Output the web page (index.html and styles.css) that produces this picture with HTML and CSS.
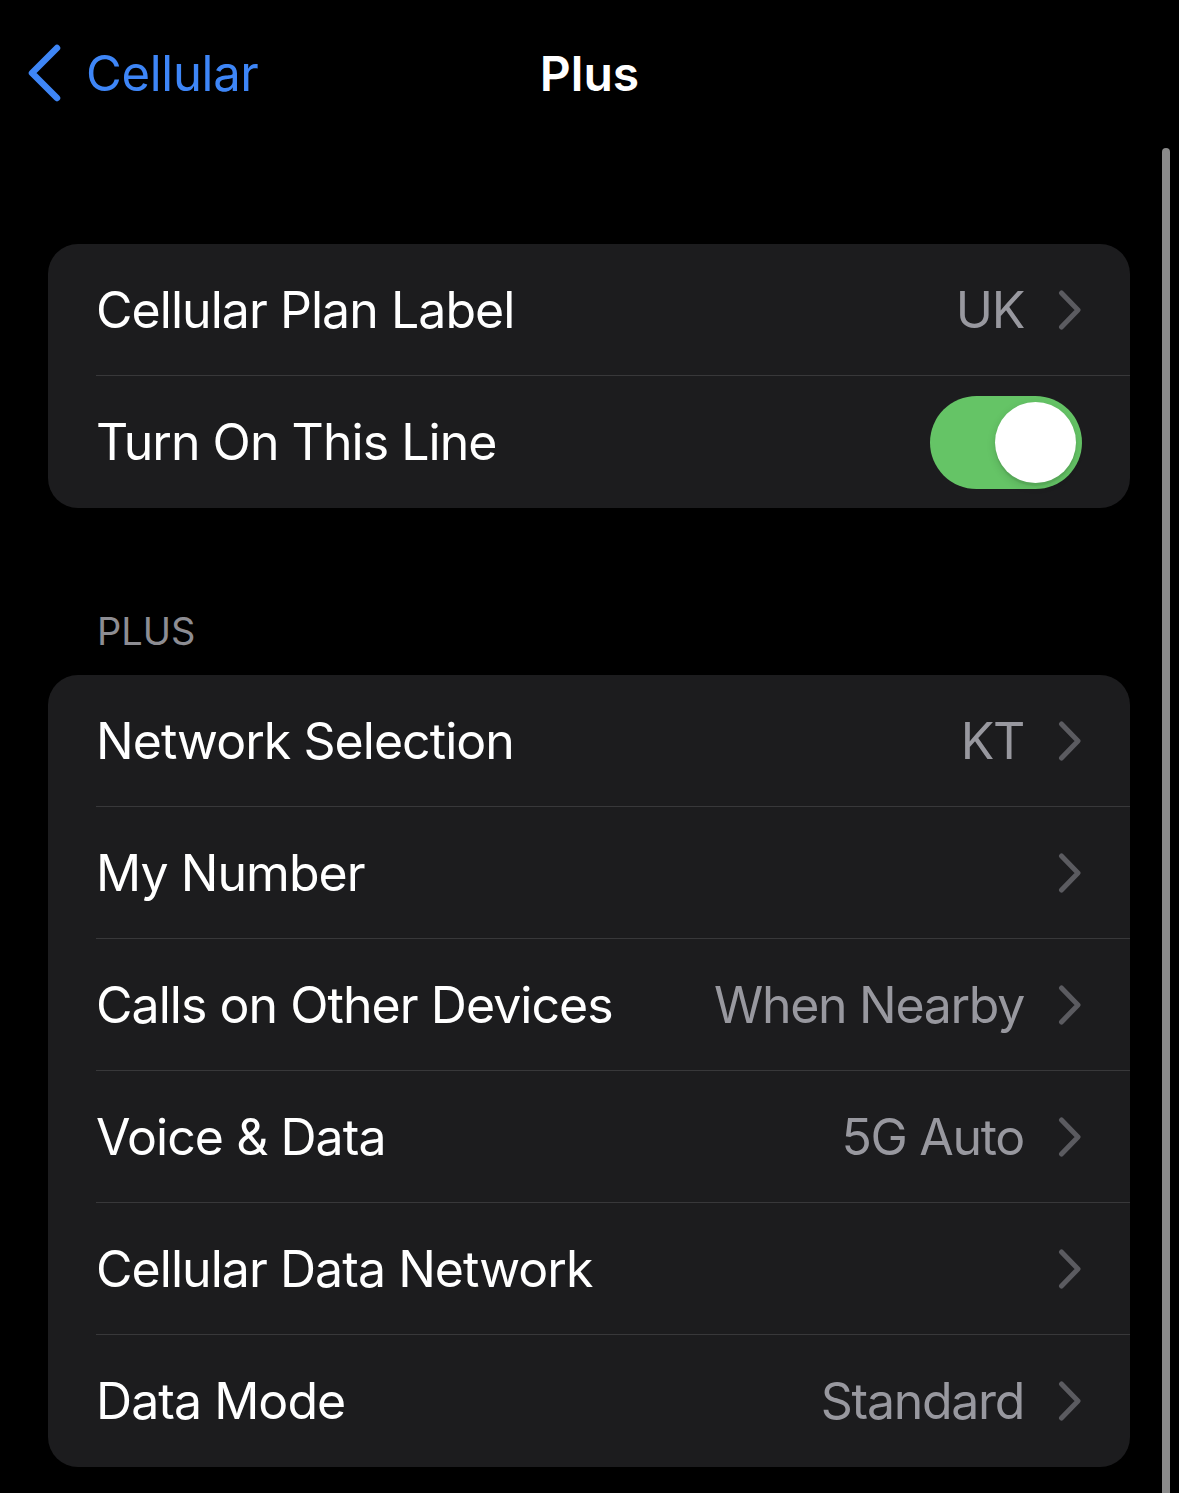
FILE: index.html
```html
<!DOCTYPE html>
<html lang="en">
  <head>
    <meta charset="UTF-8" />
    <meta name="viewport" content="width=device-width, initial-scale=1.0" />
    <title>Plus</title>
    <link rel="stylesheet" href="styles.css">
  </head>
  <body>
    <div class="nav">
      <a class="back" href="#">
        <svg class="back-icon" width="36" height="58" viewBox="0 0 36 58">
          <path d="M31 4 L6 29 L31 54" fill="none" stroke="#3e86f7" stroke-width="6.5" stroke-linecap="round" stroke-linejoin="round" />
        </svg>
        <span>Cellular</span>
      </a>
      <h1 class="title">Plus</h1>
      <div></div>
    </div>

    <div class="group first">
      <div class="row">
        <div class="row-inner">
          <span class="label">Cellular Plan Label</span>
          <span class="value">UK</span>
          <svg class="chevron" width="24" height="40" viewBox="0 0 24 40">
            <path d="M3.5 3 L20 20 L3.5 37" fill="none" stroke="#5b5b60" stroke-width="5" stroke-linecap="round" stroke-linejoin="round" />
          </svg>
        </div>
      </div>
      <div class="row">
        <div class="row-inner">
          <span class="label">Turn On This Line</span>
          <div class="switch on"><div class="knob"></div></div>
        </div>
      </div>
    </div>

    <div class="section-header">PLUS</div>

    <div class="group">
      <div class="row">
        <div class="row-inner">
          <span class="label">Network Selection</span>
          <span class="value">KT</span>
          <svg class="chevron" width="24" height="40" viewBox="0 0 24 40">
            <path d="M3.5 3 L20 20 L3.5 37" fill="none" stroke="#5b5b60" stroke-width="5" stroke-linecap="round" stroke-linejoin="round" />
          </svg>
        </div>
      </div>
      <div class="row">
        <div class="row-inner">
          <span class="label">My Number</span>
          <span class="value"></span>
          <svg class="chevron" width="24" height="40" viewBox="0 0 24 40">
            <path d="M3.5 3 L20 20 L3.5 37" fill="none" stroke="#5b5b60" stroke-width="5" stroke-linecap="round" stroke-linejoin="round" />
          </svg>
        </div>
      </div>
      <div class="row">
        <div class="row-inner">
          <span class="label">Calls on Other Devices</span>
          <span class="value">When Nearby</span>
          <svg class="chevron" width="24" height="40" viewBox="0 0 24 40">
            <path d="M3.5 3 L20 20 L3.5 37" fill="none" stroke="#5b5b60" stroke-width="5" stroke-linecap="round" stroke-linejoin="round" />
          </svg>
        </div>
      </div>
      <div class="row">
        <div class="row-inner">
          <span class="label">Voice &amp; Data</span>
          <span class="value">5G Auto</span>
          <svg class="chevron" width="24" height="40" viewBox="0 0 24 40">
            <path d="M3.5 3 L20 20 L3.5 37" fill="none" stroke="#5b5b60" stroke-width="5" stroke-linecap="round" stroke-linejoin="round" />
          </svg>
        </div>
      </div>
      <div class="row">
        <div class="row-inner">
          <span class="label">Cellular Data Network</span>
          <span class="value"></span>
          <svg class="chevron" width="24" height="40" viewBox="0 0 24 40">
            <path d="M3.5 3 L20 20 L3.5 37" fill="none" stroke="#5b5b60" stroke-width="5" stroke-linecap="round" stroke-linejoin="round" />
          </svg>
        </div>
      </div>
      <div class="row">
        <div class="row-inner">
          <span class="label">Data Mode</span>
          <span class="value">Standard</span>
          <svg class="chevron" width="24" height="40" viewBox="0 0 24 40">
            <path d="M3.5 3 L20 20 L3.5 37" fill="none" stroke="#5b5b60" stroke-width="5" stroke-linecap="round" stroke-linejoin="round" />
          </svg>
        </div>
      </div>
    </div>

    <div class="scrollbar"></div>
  </body>
</html>
```

FILE: styles.css
```css
html,
body {
  margin: 0;
  background: #000;
  height: 1493px;
  overflow: hidden;
}
body {
  position: relative;
  font-family: Inter, "Noto Sans", sans-serif;
  color: #fff;
}

/* top bar */
.nav {
  display: grid;
  grid-template-columns: 1fr auto 1fr;
  align-items: center;
  height: 146px;
}
.back {
  display: flex;
  align-items: center;
  gap: 24px;
  padding-left: 26px;
  color: #3e86f7;
  text-decoration: none;
  font-size: 49px;
  letter-spacing: -0.3px;
}
.back-icon {
  display: block;
}
.title {
  margin: 0;
  font-size: 48px;
  font-weight: 600;
  letter-spacing: 0;
}

/* grouped list */
.group {
  margin: 0 49px 0 48px;
  background: #1c1c1e;
  border-radius: 30px;
  overflow: hidden;
}
.group.first {
  margin-top: 98px;
}
.row {
  padding-left: 48px;
}
.row-inner {
  display: flex;
  align-items: center;
  height: 132px;
  padding-right: 48px;
  border-bottom: 1.5px solid #38383a;
  box-sizing: border-box;
}
.row:last-child .row-inner {
  border-bottom: none;
}
.label {
  flex: 1;
  font-size: 50px;
  letter-spacing: -0.95px;
}
.value {
  font-size: 50px;
  letter-spacing: -1.3px;
  color: #98989f;
  margin-right: 34px;
}
.chevron {
  display: block;
}

/* toggle */
.switch {
  width: 152px;
  height: 93px;
  border-radius: 47px;
  background: #39393d;
  position: relative;
}
.switch.on {
  background: #65c466;
}
.knob {
  position: absolute;
  top: 6px;
  right: 6px;
  width: 81px;
  height: 81px;
  border-radius: 50%;
  background: #fff;
  box-shadow: 0 3px 8px rgba(0, 0, 0, 0.15), 0 3px 1px rgba(0, 0, 0, 0.06);
}

.section-header {
  margin-top: 100px;
  padding: 0 0 21px 97px;
  font-size: 38px;
  line-height: 46px;
  color: #8d8d93;
}

.scrollbar {
  position: absolute;
  top: 148px;
  right: 9px;
  bottom: -10px;
  width: 8px;
  border-radius: 4px;
  background: #8a8a8a;
}
```
